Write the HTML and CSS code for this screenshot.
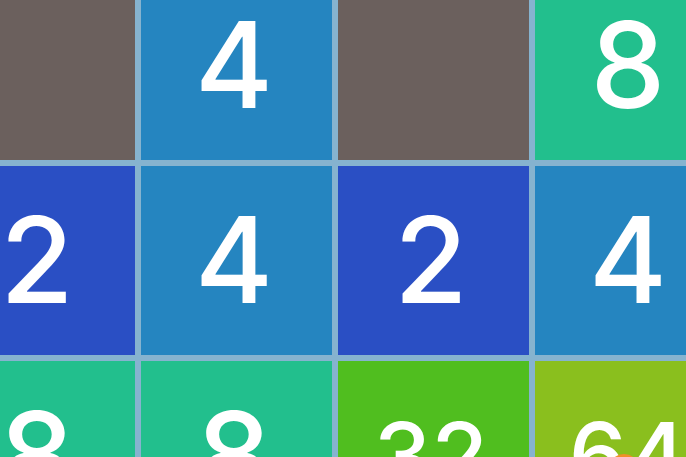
FILE: index.html
```html
<!DOCTYPE html>
<html lang="en">
<head>
    <meta charset="UTF-8">
    <meta name="viewport" content="width=device-width, initial-scale=1.0">
    <title>2048</title>
    <link rel="stylesheet" href="styles.css">
</head>
<body>
    <div class="board">
        <div class="tile empty"></div>
        <div class="tile t4">4</div>
        <div class="tile empty"></div>
        <div class="tile t8">8</div>

        <div class="tile t2">2</div>
        <div class="tile t4">4</div>
        <div class="tile t2">2</div>
        <div class="tile t4">4</div>

        <div class="tile t8">8</div>
        <div class="tile t8">8</div>
        <div class="tile t32 small">32</div>
        <div class="tile t64 small">64<span class="spark"></span></div>
    </div>
</body>
</html>
```

FILE: styles.css
```css
body
{
    margin: 0;
    padding: 0;
    overflow: hidden;
    background-color: #86b3cf;
    font-family: Inter, "Liberation Sans", Arial, sans-serif;
}
.board
{
    display: grid;
    grid-template-columns: repeat(4, 191px);
    grid-auto-rows: 189px;
    gap: 6px;
    margin-left: -56px;
    margin-top: -29px;
}
.tile
{
    position: relative;
    display: flex;
    align-items: center;
    justify-content: center;
    padding-right: 5px;
    color: #fff;
    font-size: 119px;
    font-weight: 500;
    line-height: 1;
}
.tile.small
{
    font-size: 92px;
}
.empty{ background-color: #6b605d; }
.t2{ background-color: #2a4fc4; }
.t4{ background-color: #2585c0; }
.t8{ background-color: #22bf8d; }
.t32{ background-color: #50be1f; }
.t64{ background-color: #8abf1e; }
.spark
{
    position: absolute;
    left: 76px;
    top: 93px;
    width: 26px;
    height: 20px;
    border-radius: 50%;
    background-color: #f0902a;
}
```
